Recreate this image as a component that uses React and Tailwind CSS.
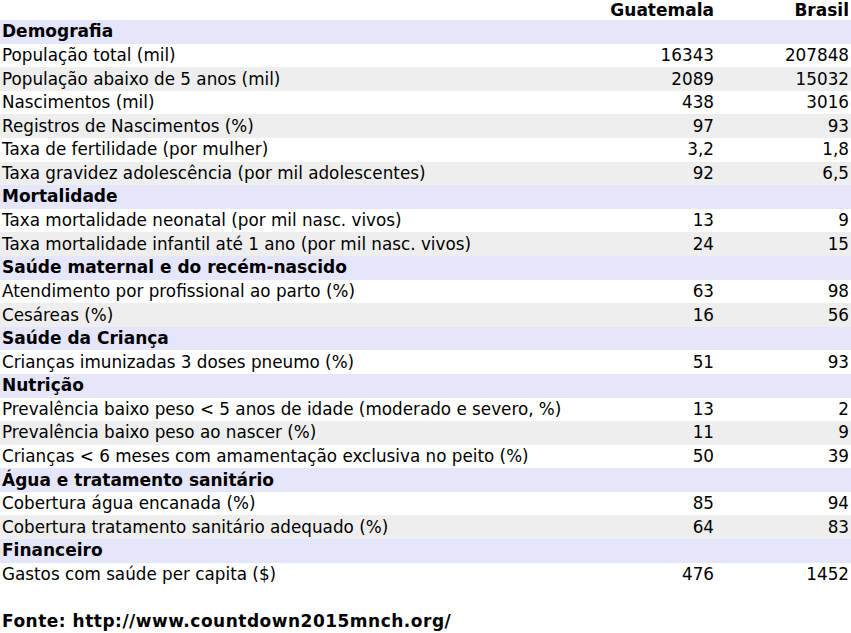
const sections = [
  {
    title: 'Demografia',
    rows: [
      ['População total (mil)', '16343', '207848'],
      ['População abaixo de 5 anos (mil)', '2089', '15032'],
      ['Nascimentos (mil)', '438', '3016'],
      ['Registros de Nascimentos (%)', '97', '93'],
      ['Taxa de fertilidade (por mulher)', '3,2', '1,8'],
      ['Taxa gravidez adolescência (por mil adolescentes)', '92', '6,5'],
    ],
  },
  {
    title: 'Mortalidade',
    rows: [
      ['Taxa mortalidade neonatal (por mil nasc. vivos)', '13', '9'],
      ['Taxa mortalidade infantil até 1 ano (por mil nasc. vivos)', '24', '15'],
    ],
  },
  {
    title: 'Saúde maternal e do recém-nascido',
    rows: [
      ['Atendimento por profissional ao parto (%)', '63', '98'],
      ['Cesáreas (%)', '16', '56'],
    ],
  },
  {
    title: 'Saúde da Criança',
    rows: [['Crianças imunizadas 3 doses pneumo (%)', '51', '93']],
  },
  {
    title: 'Nutrição',
    rows: [
      ['Prevalência baixo peso < 5 anos de idade (moderado e severo, %)', '13', '2'],
      ['Prevalência baixo peso ao nascer (%)', '11', '9'],
      ['Crianças < 6 meses com amamentação exclusiva no peito (%)', '50', '39'],
    ],
  },
  {
    title: 'Água e tratamento sanitário',
    rows: [
      ['Cobertura água encanada (%)', '85', '94'],
      ['Cobertura tratamento sanitário adequado (%)', '64', '83'],
    ],
  },
  {
    title: 'Financeiro',
    rows: [['Gastos com saúde per capita ($)', '476', '1452']],
  },
];

const font = { fontFamily: '"DejaVu Sans", Verdana, sans-serif' };

// data row, alternating white / light gray inside each section
const Row = ({ label, a, b, shaded }) => (
  <div className={`flex h-[23.6px] items-center px-[2px] ${shaded ? 'bg-[#eeeeee]' : 'bg-white'}`}>
    <div className="flex-1 whitespace-nowrap">{label}</div>
    <div className="w-[140px] text-right">{a}</div>
    <div className="w-[135px] text-right">{b}</div>
  </div>
);

export default function App() {
  return (
    <div
      className="w-[851px] h-[633px] bg-white text-black text-[16.8px] leading-none"
      style={font}
    >
      {/* column headings */}
      <div className="flex h-[20px] items-center px-[2px] text-[17px] font-bold">
        <div className="flex-1" />
        <div className="w-[140px] text-right">Guatemala</div>
        <div className="w-[135px] text-right">Brasil</div>
      </div>

      {sections.map((s) => (
        <div key={s.title}>
          <div className="flex h-[23.6px] items-center px-[2px] bg-[#e6e6fa] text-[17px] font-bold">
            {s.title}
          </div>
          {s.rows.map((r, i) => (
            <Row key={r[0]} label={r[0]} a={r[1]} b={r[2]} shaded={i % 2 === 1} />
          ))}
        </div>
      ))}

      {/* source */}
      <div className="pt-[27px] px-[2px] text-[17px] font-bold tracking-[0.5px]">
        Fonte: http://www.countdown2015mnch.org/
      </div>
    </div>
  );
}
